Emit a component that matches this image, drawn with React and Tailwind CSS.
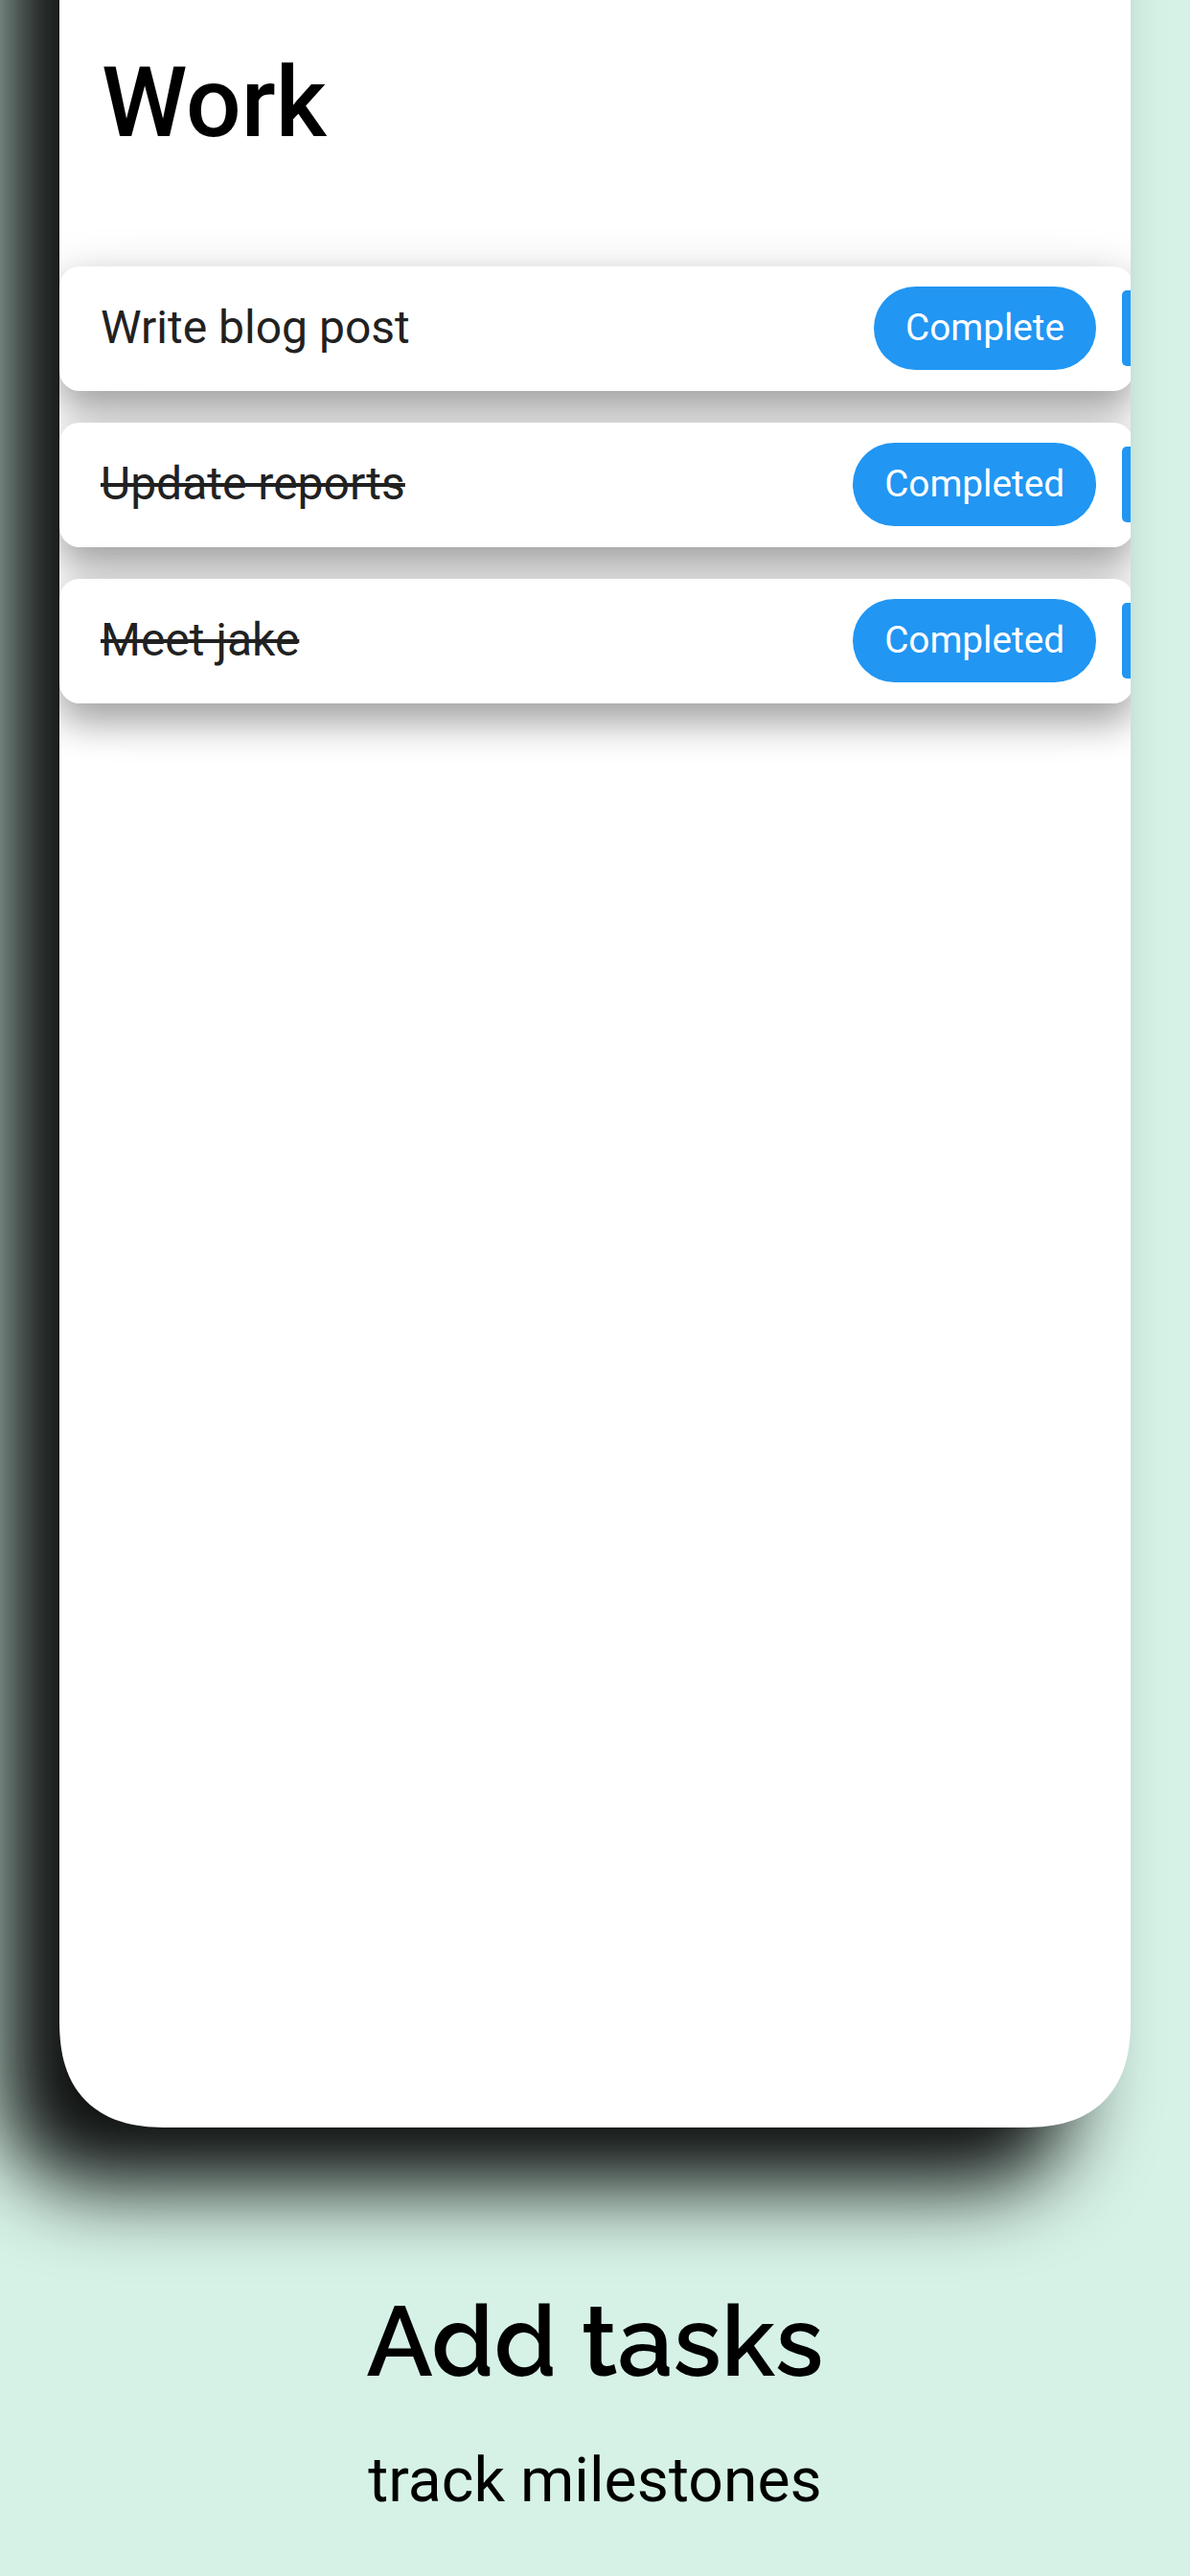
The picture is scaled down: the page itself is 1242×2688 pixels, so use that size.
import React from 'react';

const tasks = [
	{ id: 1, title: 'Write blog post', done: false },
	{ id: 2, title: 'Update reports', done: true },
	{ id: 3, title: 'Meet jake', done: true },
];

const TaskCard = ({ title, done }) => {
	return (
		<div className="flex h-[130.5px] w-[1121px] shrink-0 items-center rounded-[21px] bg-white pl-[43px] shadow-[0_20px_36px_rgba(0,0,0,0.27),0_11px_54px_rgba(0,0,0,0.16)]">
			<p
				className={`grow pb-[2px] text-[48px] leading-none text-[#212121] ${
					done ? 'line-through decoration-[4px]' : ''
				}`}>
				{title}
			</p>
			<button className="h-[87px] rounded-full bg-[#2196f3] px-[33px] pb-[2px] text-[38.7px] leading-none text-white">
				{done ? 'Completed' : 'Complete'}
			</button>
			{/* Next action, cut off by the edge of the screen */}
			<div className="ml-[27px] h-[79px] w-[12px] rounded-l-[5px] bg-[#2196f3]" />
		</div>
	);
};

const App = () => {
	return (
		<div className="flex h-[2688px] w-[1242px] flex-col overflow-hidden bg-[#d6f2e6] font-['Roboto',sans-serif]">
			{/* Phone screen, its top half runs off the page */}
			<div className="-mt-[400px] ml-[62px] h-[2619.5px] w-[1118px] shrink-0 rounded-b-[113px] bg-white shadow-[-62px_62px_84px_rgba(0,0,0,0.94)] [corner-shape:superellipse(1.3)]">
				<div className="h-full overflow-hidden rounded-b-[113px] pt-[400px] [corner-shape:superellipse(1.3)]">
					<h1 className="h-[277.7px] pt-[57px] pl-[44px] text-[101.7px] leading-[102px] font-medium text-black">
						Work
					</h1>
					<div className="flex flex-col gap-[32.5px]">
						{tasks.map((task) => (
							<TaskCard key={task.id} title={task.title} done={task.done} />
						))}
					</div>
				</div>
			</div>

			{/* Caption */}
			<div className="flex flex-col items-center pt-[172px] text-black">
				<h2 className="font-['Raleway','Lato',sans-serif] text-[102.8px] leading-[102px] font-semibold">
					Add tasks
				</h2>
				<p className="mt-[62px] text-[64.3px] leading-[64px]">track milestones</p>
			</div>
		</div>
	);
};

export default App;
